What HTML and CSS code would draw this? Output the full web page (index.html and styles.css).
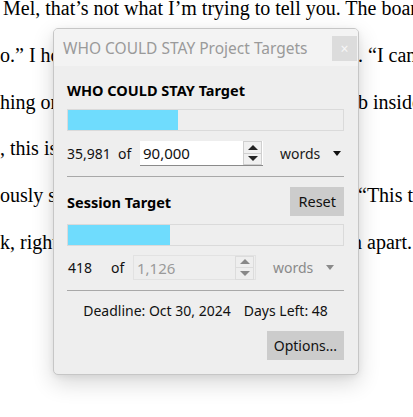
FILE: index.html
```html
<!DOCTYPE html>
<html lang="en">
<head>
<meta charset="utf-8">
<title>Project Targets</title>
<link rel="stylesheet" href="styles.css">
</head>
<body>
<div class="doc">
  <div class="line"><span class="lead lead-first">Mel, that’s not what I’m trying to tell you. The board</span></div>
  <div class="line"><span class="lead">o.” I hold up my hands, palms out, and take a slow breath</span><span class="tail">. “I can’t</span></div>
  <div class="line"><span class="lead">hing on my own anymore. There’s a dull, constant throb</span><span class="tail">b inside</span></div>
  <div class="line"><span class="lead">, this is the part nobody ever warns you about.</span></div>
  <div class="line"><span class="lead">ously searching her face for something, anything at all</span><span class="tail">“This t</span></div>
  <div class="line"><span class="lead">k, right before the whole thing finally comes crashing dow</span><span class="tail tail-cut">n apart.</span></div>
</div>

<div class="dialog">
  <div class="titlebar">
    <span class="title">WHO COULD STAY Project Targets</span>
    <span class="close">×</span>
  </div>
  <div class="panel">
    <div class="heading">WHO COULD STAY Target</div>
    <div class="bar"><div class="fill" style="width:40%"></div></div>
    <div class="row">
      <span class="count">35,981</span>
      <span class="of">of</span>
      <div class="spin">
        <span class="value">90,000</span>
        <div class="arrows">
          <span class="arrow up"></span>
          <span class="arrow down"></span>
        </div>
      </div>
      <span class="unit">words</span>
      <span class="caret"></span>
    </div>
    <div class="rule"></div>
    <div class="head-row">
      <span class="heading">Session Target</span>
      <span class="btn">Reset</span>
    </div>
    <div class="bar bar-2"><div class="fill" style="width:37.1%"></div></div>
    <div class="row row-2 is-disabled">
      <span class="count count-2">418</span>
      <span class="of">of</span>
      <div class="spin">
        <span class="value">1,126</span>
        <div class="arrows">
          <span class="arrow up"></span>
          <span class="arrow down"></span>
        </div>
      </div>
      <span class="unit">words</span>
      <span class="caret"></span>
    </div>
    <div class="rule rule-2"></div>
    <div class="deadline"><span>Deadline: Oct 30, 2024</span><span>Days Left: 48</span></div>
    <div class="foot"><span class="btn btn-options">Options...</span></div>
  </div>
</div>
</body>
</html>
```

FILE: styles.css
```css
* { box-sizing: border-box; }

html, body {
  margin: 0;
  padding: 0;
  background: #ffffff;
  width: 413px;
  height: 417px;
  overflow: hidden;
}

body {
  position: relative;
}

/* background manuscript */
.doc {
  margin-top: -15px;
  font-family: "Liberation Serif", "Times New Roman", serif;
  font-size: 20px;
  line-height: 46.8px;
  color: #000;
}

.line {
  display: flex;
  white-space: nowrap;
  overflow: hidden;
  width: 413px;
}

.lead {
  flex: 0 0 358px;
  overflow: hidden;
}

.lead-first {
  flex: 0 0 auto;
  padding-left: 3px;
}

.tail {
  flex: 0 0 auto;
}

.tail-cut {
  margin-left: -6px;
}

/* dialog */
.dialog {
  position: absolute;
  left: 53px;
  top: 28px;
  width: 306px;
  height: 347px;
  background: #eeeeee;
  border: 1px solid #c6c6c6;
  border-radius: 5px;
  box-shadow: 0 8px 22px rgba(0, 0, 0, 0.16), 0 2px 6px rgba(0, 0, 0, 0.06);
  font-family: "Noto Sans", "Open Sans", sans-serif;
  font-size: 14px;
  color: #111;
  overflow: hidden;
}

.titlebar {
  height: 37px;
  background: #f3f3f3;
  display: flex;
  align-items: center;
  justify-content: space-between;
  padding: 0 1px 0 9px;
}

.title {
  color: #9a9a9a;
  font-size: 15.5px;
  margin-top: 1px;
}

.close {
  width: 25px;
  height: 25px;
  background: #dcdcdc;
  color: #f7f7f7;
  font-size: 14px;
  line-height: 25px;
  text-align: center;
  margin-top: 2px;
}

.panel {
  padding: 14px 14px 0 13px;
  display: flex;
  flex-direction: column;
}

.heading {
  font-weight: 700;
  font-size: 14.5px;
  line-height: 20px;
  color: #000;
}

.bar {
  margin-top: 9px;
  height: 22px;
  border: 1px solid #dadada;
  background: #eeeeee;
}

.bar-2 {
  margin-top: 8px;
}

.fill {
  height: 100%;
  background: #6fdcfd;
}

.row {
  margin-top: 10px;
  height: 25px;
  display: flex;
  align-items: center;
  font-size: 14px;
}

.row-2 {
  margin-top: 9px;
}

.count {
  width: 51px;
}

.count-2 {
  width: 44px;
  padding-left: 1px;
}

.of {
  width: 22px;
}

.spin {
  width: 123px;
  height: 25px;
  background: #ffffff;
  border-bottom: 1px solid #8a8a8a;
  display: flex;
  align-items: center;
  justify-content: space-between;
  padding: 0 1px 0 3px;
}

.value {
  font-size: 15px;
}

.arrows {
  width: 19px;
  height: 24px;
  display: flex;
  flex-direction: column;
  border: 1px solid #cfcfcf;
  background: #f0f0f0;
}

.arrow {
  flex: 1;
  display: flex;
  align-items: center;
  justify-content: center;
}

.arrow + .arrow {
  border-top: 1px solid #cfcfcf;
}

.arrow::before {
  content: "";
  border-left: 5px solid transparent;
  border-right: 5px solid transparent;
}

.up::before {
  border-bottom: 5px solid #222;
}

.down::before {
  border-top: 5px solid #222;
}

.unit {
  margin-left: 17px;
  font-size: 14px;
  color: #1a1a1a;
}

.caret {
  margin-left: 13px;
  width: 0;
  height: 0;
  border-left: 4px solid transparent;
  border-right: 4px solid transparent;
  border-top: 5px solid #111;
}

.is-disabled .spin {
  background: #eeeeee;
  border: 1px solid #e2e2e2;
}

.is-disabled .value {
  color: #9a9a9a;
}

.is-disabled .arrows {
  border-color: #dcdcdc;
  background: #eeeeee;
}

.is-disabled .arrow + .arrow {
  border-top-color: #dcdcdc;
}

.is-disabled .up::before { border-bottom-color: #888; }
.is-disabled .down::before { border-top-color: #888; }

.is-disabled .unit { color: #8a8a8a; }
.is-disabled .caret { border-top-color: #8a8a8a; }

.rule {
  margin-top: 10px;
  height: 1px;
  background: #a8a8a8;
}

.rule-2 {
  margin-top: 10px;
}

.head-row {
  margin-top: 10px;
  display: flex;
  align-items: center;
  justify-content: space-between;
}

.btn {
  background: #cccccc;
  color: #111;
  height: 29px;
  line-height: 29px;
  padding: 0 8px;
  font-size: 14.5px;
}

.deadline {
  margin-top: 10px;
  display: flex;
  justify-content: center;
  gap: 13px;
  line-height: 20px;
  font-size: 14px;
}

.foot {
  margin-top: 10px;
  display: flex;
  justify-content: flex-end;
}

.btn-options {
  padding: 0 7px;
  font-size: 14px;
}
```
